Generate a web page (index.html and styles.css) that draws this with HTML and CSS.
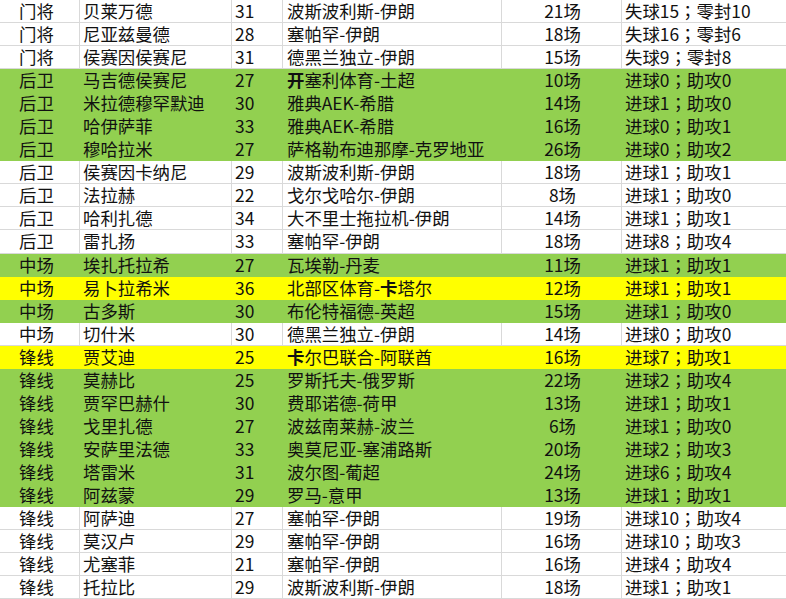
FILE: index.html
```html
<!DOCTYPE html>
<html lang="zh-CN">
<head>
<meta charset="utf-8">
<title>伊朗队名单</title>
<link rel="stylesheet" href="styles.css">
</head>
<body>
<div class="sheet">
  <div class="row"><div class="c pos">门将</div><div class="c name">贝莱万德</div><div class="c age">31</div><div class="c club">波斯波利斯-伊朗</div><div class="c games">21场</div><div class="c stat">失球15<span class="semi">；</span>零封10</div></div>
  <div class="row"><div class="c pos">门将</div><div class="c name">尼亚兹曼德</div><div class="c age">28</div><div class="c club">塞帕罕-伊朗</div><div class="c games">18场</div><div class="c stat">失球16<span class="semi">；</span>零封6</div></div>
  <div class="row"><div class="c pos">门将</div><div class="c name">侯赛因侯赛尼</div><div class="c age">31</div><div class="c club">德黑兰独立-伊朗</div><div class="c games">15场</div><div class="c stat">失球9<span class="semi">；</span>零封8</div></div>
  <div class="row green"><div class="c pos">后卫</div><div class="c name">马吉德侯赛尼</div><div class="c age">27</div><div class="c club"><b>开</b>塞利体育-土超</div><div class="c games">10场</div><div class="c stat">进球0<span class="semi">；</span>助攻0</div></div>
  <div class="row green"><div class="c pos">后卫</div><div class="c name">米拉德穆罕默迪</div><div class="c age">30</div><div class="c club">雅典AEK-希腊</div><div class="c games">14场</div><div class="c stat">进球1<span class="semi">；</span>助攻0</div></div>
  <div class="row green"><div class="c pos">后卫</div><div class="c name">哈伊萨菲</div><div class="c age">33</div><div class="c club">雅典AEK-希腊</div><div class="c games">16场</div><div class="c stat">进球0<span class="semi">；</span>助攻1</div></div>
  <div class="row green"><div class="c pos">后卫</div><div class="c name">穆哈拉米</div><div class="c age">27</div><div class="c club">萨格勒布迪那摩-克罗地亚</div><div class="c games">26场</div><div class="c stat">进球0<span class="semi">；</span>助攻2</div></div>
  <div class="row"><div class="c pos">后卫</div><div class="c name">侯赛因卡纳尼</div><div class="c age">29</div><div class="c club">波斯波利斯-伊朗</div><div class="c games">18场</div><div class="c stat">进球1<span class="semi">；</span>助攻1</div></div>
  <div class="row"><div class="c pos">后卫</div><div class="c name">法拉赫</div><div class="c age">22</div><div class="c club">戈尔戈哈尔-伊朗</div><div class="c games">8场</div><div class="c stat">进球1<span class="semi">；</span>助攻0</div></div>
  <div class="row"><div class="c pos">后卫</div><div class="c name">哈利扎德</div><div class="c age">34</div><div class="c club">大不里士拖拉机-伊朗</div><div class="c games">14场</div><div class="c stat">进球1<span class="semi">；</span>助攻1</div></div>
  <div class="row"><div class="c pos">后卫</div><div class="c name">雷扎扬</div><div class="c age">33</div><div class="c club">塞帕罕-伊朗</div><div class="c games">18场</div><div class="c stat">进球8<span class="semi">；</span>助攻4</div></div>
  <div class="row green"><div class="c pos">中场</div><div class="c name">埃扎托拉希</div><div class="c age">27</div><div class="c club">瓦埃勒-丹麦</div><div class="c games">11场</div><div class="c stat">进球1<span class="semi">；</span>助攻1</div></div>
  <div class="row yellow"><div class="c pos">中场</div><div class="c name">易卜拉希米</div><div class="c age">36</div><div class="c club">北部区体育-<b>卡</b>塔尔</div><div class="c games">12场</div><div class="c stat">进球1<span class="semi">；</span>助攻1</div></div>
  <div class="row green"><div class="c pos">中场</div><div class="c name">古多斯</div><div class="c age">30</div><div class="c club">布伦特福德-英超</div><div class="c games">15场</div><div class="c stat">进球1<span class="semi">；</span>助攻0</div></div>
  <div class="row"><div class="c pos">中场</div><div class="c name">切什米</div><div class="c age">30</div><div class="c club">德黑兰独立-伊朗</div><div class="c games">14场</div><div class="c stat">进球0<span class="semi">；</span>助攻0</div></div>
  <div class="row yellow"><div class="c pos">锋线</div><div class="c name">贾艾迪</div><div class="c age">25</div><div class="c club"><b>卡</b>尔巴联合-阿联酋</div><div class="c games">16场</div><div class="c stat">进球7<span class="semi">；</span>助攻1</div></div>
  <div class="row green"><div class="c pos">锋线</div><div class="c name">莫赫比</div><div class="c age">25</div><div class="c club">罗斯托夫-俄罗斯</div><div class="c games">22场</div><div class="c stat">进球2<span class="semi">；</span>助攻4</div></div>
  <div class="row green"><div class="c pos">锋线</div><div class="c name">贾罕巴赫什</div><div class="c age">30</div><div class="c club">费耶诺德-荷甲</div><div class="c games">13场</div><div class="c stat">进球1<span class="semi">；</span>助攻1</div></div>
  <div class="row green"><div class="c pos">锋线</div><div class="c name">戈里扎德</div><div class="c age">27</div><div class="c club">波兹南莱赫-波兰</div><div class="c games">6场</div><div class="c stat">进球1<span class="semi">；</span>助攻0</div></div>
  <div class="row green"><div class="c pos">锋线</div><div class="c name">安萨里法德</div><div class="c age">33</div><div class="c club">奥莫尼亚-塞浦路斯</div><div class="c games">20场</div><div class="c stat">进球2<span class="semi">；</span>助攻3</div></div>
  <div class="row green"><div class="c pos">锋线</div><div class="c name">塔雷米</div><div class="c age">31</div><div class="c club">波尔图-葡超</div><div class="c games">24场</div><div class="c stat">进球6<span class="semi">；</span>助攻4</div></div>
  <div class="row green"><div class="c pos">锋线</div><div class="c name">阿兹蒙</div><div class="c age">29</div><div class="c club">罗马-意甲</div><div class="c games">13场</div><div class="c stat">进球1<span class="semi">；</span>助攻1</div></div>
  <div class="row"><div class="c pos">锋线</div><div class="c name">阿萨迪</div><div class="c age">27</div><div class="c club">塞帕罕-伊朗</div><div class="c games">19场</div><div class="c stat">进球10<span class="semi">；</span>助攻4</div></div>
  <div class="row"><div class="c pos">锋线</div><div class="c name">莫汉卢</div><div class="c age">29</div><div class="c club">塞帕罕-伊朗</div><div class="c games">16场</div><div class="c stat">进球10<span class="semi">；</span>助攻3</div></div>
  <div class="row"><div class="c pos">锋线</div><div class="c name">尤塞菲</div><div class="c age">21</div><div class="c club">塞帕罕-伊朗</div><div class="c games">16场</div><div class="c stat">进球4<span class="semi">；</span>助攻4</div></div>
  <div class="row"><div class="c pos">锋线</div><div class="c name">托拉比</div><div class="c age">29</div><div class="c club">波斯波利斯-伊朗</div><div class="c games">18场</div><div class="c stat">进球1<span class="semi">；</span>助攻1</div></div>
</div>
</body>
</html>
```

FILE: styles.css
```css
html, body {
  margin: 0;
  padding: 0;
  background: #ffffff;
  overflow: hidden;
}

.sheet {
  width: 786px;
  font-family: "Noto Sans CJK SC", "Noto Sans", sans-serif;
  font-size: 17.4px;
  color: #111111;
}

.row {
  display: grid;
  grid-template-columns: 80px 152px 51px 219px 120px 164px;
  height: 23.05px;
  box-sizing: border-box;
  border-bottom: 1px solid #d9d9d9;
  background: #ffffff;
}

.row.green {
  background: #92d050;
  border-bottom-color: #92d050;
}

.row.yellow {
  background: #ffff00;
  border-bottom-color: #ffff00;
}

.c {
  display: flex;
  align-items: center;
  box-sizing: border-box;
  white-space: nowrap;
  border-right: 1px solid #d9d9d9;
  line-height: 20px;
}

.row.green .c,
.row.yellow .c {
  border-right-color: transparent;
}

.pos { padding-left: 19px; }
.name { padding-left: 3px; }
.age { padding-left: 3px; }
.club { padding-left: 4px; }
.games { justify-content: center; padding-left: 2px; }
.stat { padding-left: 3px; border-right: none; }

.club b {
  font-weight: 700;
}

.semi {
  font-family: "Noto Sans CJK TC", "Noto Sans CJK SC", sans-serif;
}
```
